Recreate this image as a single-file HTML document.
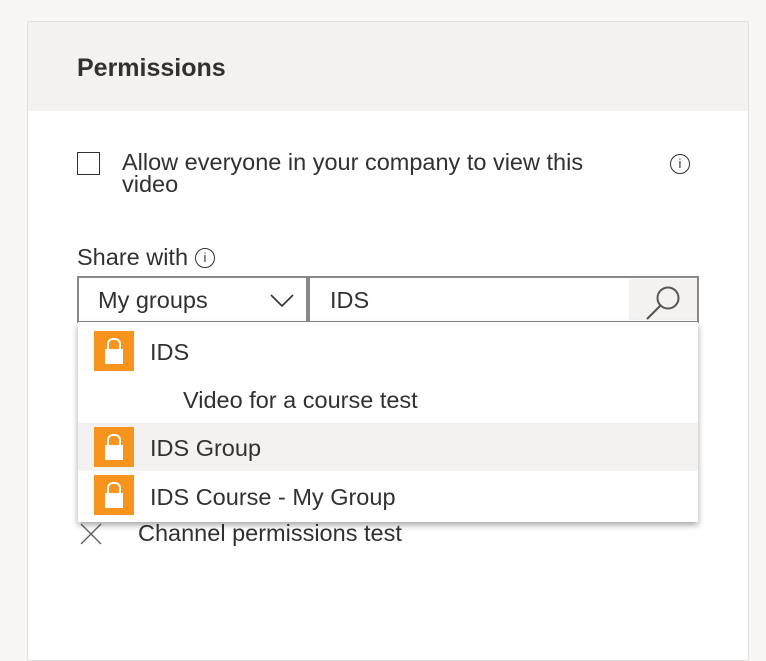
<!DOCTYPE html>
<html><head><meta charset="utf-8"><style>
*{margin:0;padding:0;box-sizing:border-box}
body{width:766px;height:620px;background:#f8f7f6;font-family:"Liberation Sans",sans-serif;color:#323130;position:relative;overflow:hidden}
.card{position:absolute;left:27px;top:21px;width:722px;height:640px;background:#fff;border:1px solid #e1dfdd;border-radius:2px}
.hdr{position:absolute;left:0;top:0;width:100%;height:89px;background:#f3f2f1}
.a{position:absolute;white-space:nowrap}
.t{font-size:23.5px;line-height:28px}
.info{position:absolute;width:20px;height:20px;border:1.3px solid #323130;border-radius:50%;font-size:13px;text-align:center;line-height:18px;font-family:"Liberation Sans",sans-serif}
.lock{position:absolute;left:94px;width:40px;height:40px;background:#f7941e}
.lock:before{content:"";position:absolute;left:13px;top:7px;width:10px;height:12px;border:2.5px solid #fff;border-bottom:none;border-radius:6px 6px 0 0}
.lock:after{content:"";position:absolute;left:11px;top:18px;width:18px;height:15px;background:#fff}
</style></head><body>
<div class="card"><div class="hdr"></div></div>
<div class="a" style="left:77px;top:54px;font-size:25px;font-weight:bold;color:#323130">Permissions</div>
<div class="a" style="left:77px;top:152px;width:23px;height:23px;border:1.5px solid #323130"></div>
<div class="a" style="left:122px;top:151px;font-size:23.5px;line-height:22px">Allow everyone in your company to view this<br>video</div>
<div class="info" style="left:670px;top:154px">i</div>
<div class="a t" style="left:77px;top:243px">Share with</div>
<div class="info" style="left:195px;top:248px">i</div>
<div class="a" style="left:77px;top:276px;width:231px;height:47px;border:2px solid #8a8886"></div>
<div class="a t" style="left:98px;top:286px">My groups</div>
<svg class="a" style="left:270px;top:294px" width="24" height="14"><path d="M1 1 L12 12 L23 1" fill="none" stroke="#323130" stroke-width="1.6"/></svg>
<div class="a" style="left:308px;top:276px;width:391px;height:47px;border:2px solid #8a8886"></div>
<div class="a" style="left:629px;top:279px;width:68px;height:41px;background:#f3f2f1"></div>
<svg class="a" style="left:640px;top:282px" width="44" height="40"><circle cx="28" cy="16" r="10.5" fill="none" stroke="#555" stroke-width="2"/><path d="M20 24 L7 37" stroke="#555" stroke-width="2"/></svg>
<div class="a t" style="left:330px;top:286px">IDS</div>
<div class="a t" style="left:138px;top:519px">Channel permissions test</div>
<svg class="a" style="left:79px;top:522px" width="24" height="24"><path d="M2 2 L22 22 M22 2 L2 22" stroke="#605e5c" stroke-width="1.3"/></svg>
<div class="a" style="left:78px;top:322px;width:620px;height:200px;background:#fff;box-shadow:0 3px 6px rgba(0,0,0,.35)"></div>
<div class="a" style="left:78px;top:423px;width:620px;height:48px;background:#f3f2f1"></div>
<div class="lock" style="top:331px"></div>
<div class="a t" style="left:150px;top:338px">IDS</div>
<div class="a t" style="left:183px;top:386px">Video for a course test</div>
<div class="lock" style="top:427px"></div>
<div class="a t" style="left:150px;top:434px">IDS Group</div>
<div class="lock" style="top:475px"></div>
<div class="a t" style="left:150px;top:483px">IDS Course - My Group</div>
</body></html>
